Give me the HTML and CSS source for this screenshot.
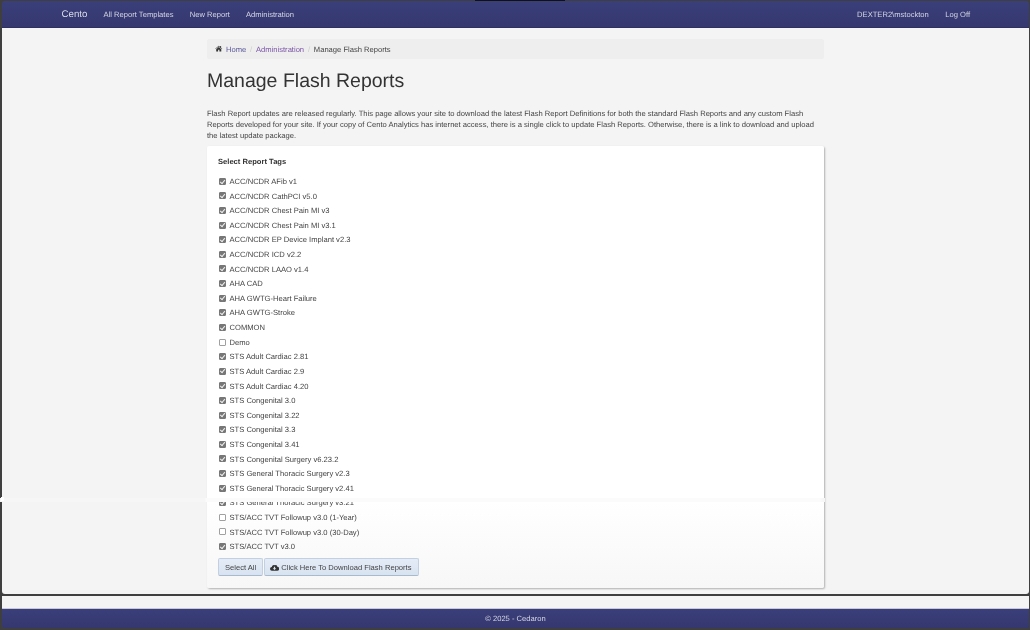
FILE: index.html
```html
<!DOCTYPE html>
<html lang="en">
<head>
<meta charset="utf-8">
<title>Manage Flash Reports</title>
<link rel="stylesheet" href="styles.css">
</head>
<body>
<div class="camera-notch"></div>
<header class="navbar">
  <nav class="nav-left">
    <a class="brand" href="#">Cento</a>
    <a href="#">All Report Templates</a>
    <a href="#">New Report</a>
    <a href="#">Administration</a>
  </nav>
  <nav class="nav-right">
    <a href="#">DEXTER2\mstockton</a>
    <a href="#">Log Off</a>
  </nav>
</header>
<main class="main">
  <div class="seam"></div>
  <div class="seam-tick"></div>
  <div class="container">
    <ol class="breadcrumb">
      <li><svg class="home" viewBox="0 0 16 14"><path d="M8 1 0.5 7.400l.8.9L8 2.700l6.700 5.600.8-.9L13 5.300V1.600h-2v2L8 1zM2.600 8.400V13.500h4V9.500h2.800v4h4V8.400L8 3.900z"/></svg><a href="#">Home</a></li>
      <li><a href="#" class="visited">Administration</a></li>
      <li>Manage Flash Reports</li>
    </ol>
    <h1>Manage Flash Reports</h1>
    <p class="intro">Flash Report updates are released regularly. This page allows your site to download the latest Flash Report Definitions for both the standard Flash Reports and any custom Flash Reports developed for your site. If your copy of Cento Analytics has internet access, there is a single click to update Flash Reports. Otherwise, there is a link to download and upload the latest update package.</p>
    <form class="card">
      <h2>Select Report Tags</h2>
      <ul class="tags">
        <li><label><input type="checkbox" checked>ACC/NCDR AFib v1</label></li>
        <li><label><input type="checkbox" checked>ACC/NCDR CathPCI v5.0</label></li>
        <li><label><input type="checkbox" checked>ACC/NCDR Chest Pain MI v3</label></li>
        <li><label><input type="checkbox" checked>ACC/NCDR Chest Pain MI v3.1</label></li>
        <li><label><input type="checkbox" checked>ACC/NCDR EP Device Implant v2.3</label></li>
        <li><label><input type="checkbox" checked>ACC/NCDR ICD v2.2</label></li>
        <li><label><input type="checkbox" checked>ACC/NCDR LAAO v1.4</label></li>
        <li><label><input type="checkbox" checked>AHA CAD</label></li>
        <li><label><input type="checkbox" checked>AHA GWTG-Heart Failure</label></li>
        <li><label><input type="checkbox" checked>AHA GWTG-Stroke</label></li>
        <li><label><input type="checkbox" checked>COMMON</label></li>
        <li><label><input type="checkbox">Demo</label></li>
        <li><label><input type="checkbox" checked>STS Adult Cardiac 2.81</label></li>
        <li><label><input type="checkbox" checked>STS Adult Cardiac 2.9</label></li>
        <li><label><input type="checkbox" checked>STS Adult Cardiac 4.20</label></li>
        <li><label><input type="checkbox" checked>STS Congenital 3.0</label></li>
        <li><label><input type="checkbox" checked>STS Congenital 3.22</label></li>
        <li><label><input type="checkbox" checked>STS Congenital 3.3</label></li>
        <li><label><input type="checkbox" checked>STS Congenital 3.41</label></li>
        <li><label><input type="checkbox" checked>STS Congenital Surgery v6.23.2</label></li>
        <li><label><input type="checkbox" checked>STS General Thoracic Surgery v2.3</label></li>
        <li><label><input type="checkbox" checked>STS General Thoracic Surgery v2.41</label></li>
        <li><label><input type="checkbox" checked>STS General Thoracic Surgery v3.21</label></li>
        <li><label><input type="checkbox">STS/ACC TVT Followup v3.0 (1-Year)</label></li>
        <li><label><input type="checkbox">STS/ACC TVT Followup v3.0 (30-Day)</label></li>
        <li><label><input type="checkbox" checked>STS/ACC TVT v3.0</label></li>
      </ul>
      <div class="actions">
        <button type="button" class="btn">Select All</button>
        <button type="button" class="btn btn-icon"><svg class="cloud" viewBox="0 0 18 13"><path d="M14.600 5.200A3.600 3.600 0 0 0 9.900 2 4.500 4.500 0 0 0 3.600 5.500 3.700 3.700 0 0 0 4 13h10.300a3.900 3.900 0 0 0 .3-7.800zM9 11.600 5.500 8h2.300V5h2.400v3h2.300z"/></svg>Click Here To Download Flash Reports</button>
      </div>
    </form>
  </div>
</main>
<div class="divider"></div>
<div class="spacer"></div>
<footer class="footer">© 2025 - Cedaron</footer>
</body>
</html>
```
FILE: styles.css
```css
* { box-sizing: border-box; }
html, body { height: 100%; }
html { background: #3f3f40; }
body {
  margin: 0;
  height: 630px;
  padding: 1px 1px 2px 2px;
  display: flex;
  flex-direction: column;
  background: #3f3f40;
  font-family: "Liberation Sans", Arial, sans-serif;
  font-size: 7.600px;
  text-rendering: geometricPrecision;
  color: #444;
  overflow: hidden;
  position: relative;
  filter: blur(0.3px);
}
a { text-decoration: none; }
.camera-notch {
  position: absolute;
  top: 0;
  left: 475px;
  width: 90px;
  height: 1px;
  background: #111;
}
.navbar {
  flex: 0 0 27px;
  display: flex;
  justify-content: space-between;
  align-items: center;
  padding: 0 59px 0 59.500px;
  background: linear-gradient(#3a3e7a, #35386f);
  border-bottom: 1px solid #2d3060;
  border-radius: 3px 3px 0 0;
}
.nav-left, .nav-right { display: flex; align-items: center; }
.navbar a { color: #d5d6e4; }
.nav-left { gap: 16.200px; }
.nav-right { gap: 16.400px; }
.navbar .brand { font-size: 9.700px; color: #d9dae6; }
.main {
  flex: 1;
  position: relative;
  background: #f4f4f4;
  border-radius: 0 0 3px 3px;
}
.container {
  width: 617px;
  margin: 11px auto 0;
}
.breadcrumb {
  list-style: none;
  margin: 0;
  padding: 0 8px;
  height: 20px;
  display: flex;
  align-items: center;
  background: #eeeeee;
  border-radius: 2px;
  color: #444;
}
.breadcrumb li + li::before {
  content: "/";
  padding: 0 3.800px;
  color: #ccc;
}
.breadcrumb a { color: #5a5a9a; }
.breadcrumb a.visited { color: #7a55a5; }
.home { width: 7.500px; height: 7px; margin-right: 3.500px; fill: #333; vertical-align: -0.500px; }
h1 {
  margin: 10px 0 0;
  height: 24px;
  line-height: 24px;
  font-size: 19.500px;
  font-weight: 400;
  color: #333;
}
.intro {
  margin: 14.500px 0 0;
  line-height: 11px;
  color: #444;
}
.card {
  margin-top: 5px;
  height: 442px;
  padding: 10.500px 11px 0;
  background: linear-gradient(#fff 0, #fff 355px, #fff 356px, #f7f7f7 100%);
  border-radius: 2px;
  box-shadow: 1px 1px 2px rgba(0, 0, 0, .28);
}
h2 {
  margin: 0;
  height: 11px;
  line-height: 11px;
  font-size: 7.600px;
  font-weight: 700;
  color: #333;
}
.tags { list-style: none; margin: 8px 0 0; padding: 0; }
.tags li { height: 14.620px; line-height: 14.620px; }
.tags label { display: flex; align-items: center; color: #444; }
.tags input {
  appearance: none;
  position: relative;
  width: 7px;
  height: 7px;
  margin: -2px 4px 0 0.500px;
  flex: none;
  background: #fff;
  border: 1px solid #a0a0a0;
  border-radius: 1px;
}
.tags input:checked { background: #777; border-color: #777; }
.tags input:checked::after {
  content: "";
  position: absolute;
  left: 1.200px;
  top: -0.300px;
  width: 2.400px;
  height: 4px;
  border: solid #eee;
  border-width: 0 1px 1px 0;
  transform: rotate(40deg);
}
.actions { display: flex; gap: 1px; margin-top: 3.500px; }
.btn {
  height: 18px;
  padding: 0 6px;
  font: inherit;
  color: #444;
  background: linear-gradient(#e4ecf6, #d8e3f1);
  border: 1px solid #c3d0e1;
  border-bottom-color: #a9b9ce;
  border-radius: 2px;
  display: inline-flex;
  align-items: center;
}
.btn-icon { padding-left: 5px; }
.cloud { width: 9px; height: 7px; margin-right: 2px; fill: #333; }
.seam {
  position: absolute;
  z-index: 2;
  left: -2px;
  width: 825px;
  top: 470px;
  height: 3.500px;
  background: linear-gradient(90deg, #f6f6f6 0, #f6f6f6 205px, #fbfbfb 206px, #fbfbfb 820px, #f6f6f6 823px);
}
.seam-tick {
  position: absolute;
  z-index: 2;
  left: -1px;
  width: 3px;
  top: 469px;
  height: 4px;
  background: #fff;
}
.divider { flex: 0 0 2px; background: #3f3f40; }
.spacer { flex: 0 0 13px; background: #f4f4f4; border-bottom: 1px solid #c9c9d4; }
.footer {
  flex: 0 0 19px;
  display: flex;
  align-items: center;
  justify-content: center;
  background: linear-gradient(#3a3e7a, #35386f);
  color: #d5d6e4;
  border-radius: 0 0 0 3px;
}
```
